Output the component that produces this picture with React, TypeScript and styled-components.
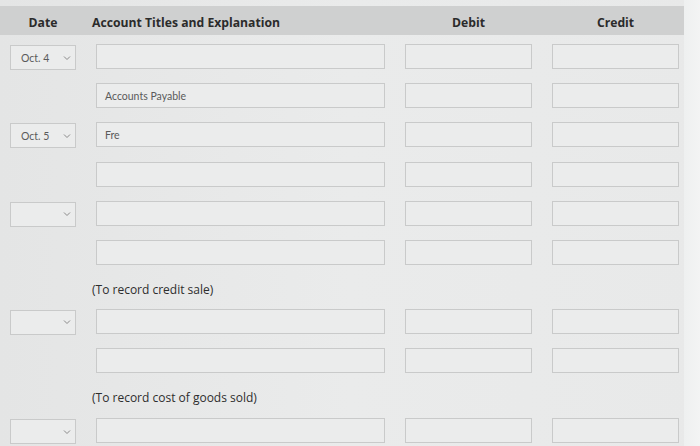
import React from "react";
import styled, { createGlobalStyle } from "styled-components";

const Global = createGlobalStyle`
  html, body { margin: 0; padding: 0; }
  body {
    width: 700px;
    height: 446px;
    overflow: hidden;
    background: #e9eaea;
    font-family: "Open Sans", "DejaVu Sans", sans-serif;
  }
`;

const Page = styled.div`
  width: 700px;
  height: 446px;
  display: flex;
  background: linear-gradient(90deg, #e4e5e5 0%, #eaebeb 50%, #e8e9e9 100%);
`;

const Sheet = styled.div`
  width: 684px;
  padding-top: 6px;
  display: flex;
  flex-direction: column;
`;

const Edge = styled.div`
  flex: 1;
  background: linear-gradient(90deg, #eef0f0, #f3f4f4);
`;

const Cols = `
  display: grid;
  grid-template-columns: 66px 289px 127px 127px;
  column-gap: 20px;
  padding-left: 10px;
`;

const Header = styled.div`
  ${Cols}
  flex: 0 0 29px;
  align-items: center;
  background: #cfd0d0;
  margin-bottom: 9px;
`;

const HeadCell = styled.div<{ $left?: boolean }>`
  font-weight: 700;
  font-size: 12.2px;
  color: #2b2b2b;
  text-align: ${(p) => (p.$left ? "left" : "center")};
  margin-left: ${(p) => (p.$left ? "-4px" : "0")};
  padding-top: 3px;
`;

const Row = styled.div`
  ${Cols}
  flex: 0 0 39.2px;
  align-items: start;
`;

const Box = styled.div`
  height: 25px;
  box-sizing: border-box;
  border: 1px solid #c9caca;
  background: #ebecec;
  display: flex;
  align-items: center;
  padding-left: 8px;
  font-family: Lato, "Open Sans", sans-serif;
  font-size: 10.5px;
  color: #5a5a5a;
`;

const Select = styled(Box)`
  justify-content: space-between;
  padding-right: 4px;
  padding-left: 10px;
  margin-top: 1px;
`;

const Chevron = styled.svg`
  width: 8px;
  height: 6px;
`;

const Memo = styled.div<{ $h: number }>`
  ${Cols}
  flex: 0 0 ${(p) => p.$h}px;
  align-items: start;
`;

const MemoText = styled.div`
  grid-column: 2 / 3;
  margin-left: -4px;
  padding-top: 2px;
  font-size: 12px;
  color: #2e2e2e;
`;

const Empty = styled.div``;

const DateSelect = ({ value }: { value?: string }) => (
  <Select>
    <span>{value || ""}</span>
    <Chevron viewBox="0 0 8 6">
      <path d="M1 1.5 L4 4.5 L7 1.5" stroke="#8a8a8a" strokeWidth="1" fill="none" />
    </Chevron>
  </Select>
);

type RowDef = { date?: string | null; account?: string };

const JRow = ({ date, account }: RowDef) => (
  <Row>
    {date === undefined ? <Empty /> : <DateSelect value={date || ""} />}
    <Box>{account}</Box>
    <Box />
    <Box />
  </Row>
);

export default function App() {
  return (
    <>
      <Global />
      <Page>
        <Sheet>
          <Header>
            <HeadCell>Date</HeadCell>
            <HeadCell $left>Account Titles and Explanation</HeadCell>
            <HeadCell>Debit</HeadCell>
            <HeadCell>Credit</HeadCell>
          </Header>
          <JRow date="Oct. 4" />
          <JRow account="Accounts Payable" />
          <JRow date="Oct. 5" account="Fre" />
          <JRow />
          <JRow date={null} />
          <JRow />
          <Memo $h={29.5}>
            <MemoText>(To record credit sale)</MemoText>
          </Memo>
          <JRow date={null} />
          <JRow />
          <Memo $h={31}>
            <MemoText>(To record cost of goods sold)</MemoText>
          </Memo>
          <JRow date={null} />
        </Sheet>
        <Edge />
      </Page>
    </>
  );
}
